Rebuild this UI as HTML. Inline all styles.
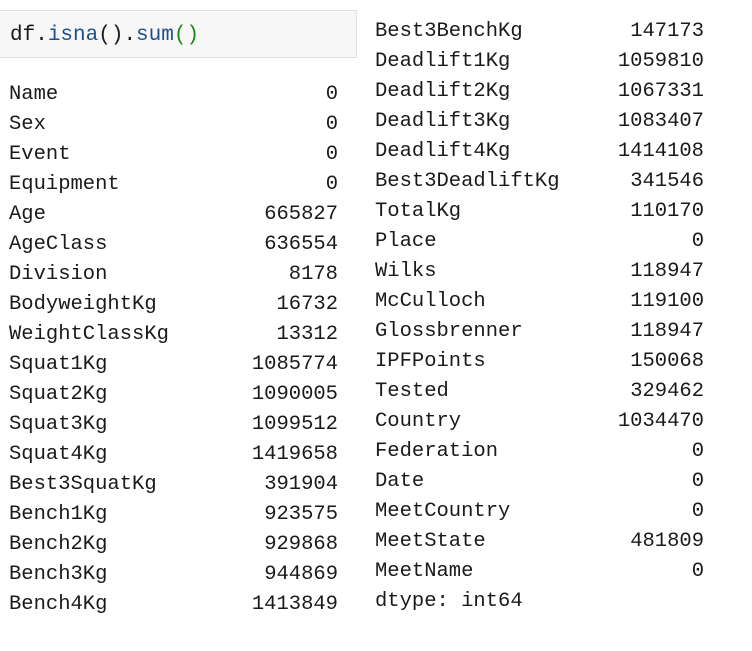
<!DOCTYPE html>
<html><head><style>
body{margin:0;width:752px;height:651px;background:#fff;position:relative;overflow:hidden;font-family:"Liberation Mono",monospace;font-size:20.5px;color:#1a1a1a}
.code{position:absolute;left:0;top:10px;width:357px;height:48px;background:#f7f7f7;border:1px solid #e2e2e2;border-left:none;box-sizing:border-box}
.code span.t{position:absolute;left:10px;top:11px;line-height:28px;font-size:21px}
.b{color:#1f4f8a}.g{color:#1d8a1d}
.col{position:absolute}
.r{height:30px;line-height:30px;position:relative}
.r .n{position:absolute;right:0}
</style></head><body>
<div class="code"><span class="t">df.<span class="b">isna</span>().<span class="b">sum</span><span class="g">()</span></span></div>
<div class="col" style="left:9px;top:80px;width:329px">
<div class="r">Name<span class="n">0</span></div>
<div class="r">Sex<span class="n">0</span></div>
<div class="r">Event<span class="n">0</span></div>
<div class="r">Equipment<span class="n">0</span></div>
<div class="r">Age<span class="n">665827</span></div>
<div class="r">AgeClass<span class="n">636554</span></div>
<div class="r">Division<span class="n">8178</span></div>
<div class="r">BodyweightKg<span class="n">16732</span></div>
<div class="r">WeightClassKg<span class="n">13312</span></div>
<div class="r">Squat1Kg<span class="n">1085774</span></div>
<div class="r">Squat2Kg<span class="n">1090005</span></div>
<div class="r">Squat3Kg<span class="n">1099512</span></div>
<div class="r">Squat4Kg<span class="n">1419658</span></div>
<div class="r">Best3SquatKg<span class="n">391904</span></div>
<div class="r">Bench1Kg<span class="n">923575</span></div>
<div class="r">Bench2Kg<span class="n">929868</span></div>
<div class="r">Bench3Kg<span class="n">944869</span></div>
<div class="r">Bench4Kg<span class="n">1413849</span></div>
</div>
<div class="col" style="left:375px;top:17px;width:329px">
<div class="r">Best3BenchKg<span class="n">147173</span></div>
<div class="r">Deadlift1Kg<span class="n">1059810</span></div>
<div class="r">Deadlift2Kg<span class="n">1067331</span></div>
<div class="r">Deadlift3Kg<span class="n">1083407</span></div>
<div class="r">Deadlift4Kg<span class="n">1414108</span></div>
<div class="r">Best3DeadliftKg<span class="n">341546</span></div>
<div class="r">TotalKg<span class="n">110170</span></div>
<div class="r">Place<span class="n">0</span></div>
<div class="r">Wilks<span class="n">118947</span></div>
<div class="r">McCulloch<span class="n">119100</span></div>
<div class="r">Glossbrenner<span class="n">118947</span></div>
<div class="r">IPFPoints<span class="n">150068</span></div>
<div class="r">Tested<span class="n">329462</span></div>
<div class="r">Country<span class="n">1034470</span></div>
<div class="r">Federation<span class="n">0</span></div>
<div class="r">Date<span class="n">0</span></div>
<div class="r">MeetCountry<span class="n">0</span></div>
<div class="r">MeetState<span class="n">481809</span></div>
<div class="r">MeetName<span class="n">0</span></div>
<div class="r">dtype: int64</div>
</div>
</body></html>
